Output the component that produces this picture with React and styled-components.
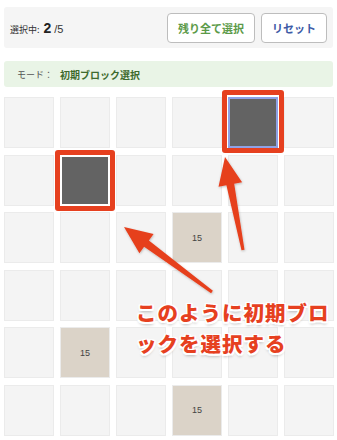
import styled, { createGlobalStyle } from 'styled-components';

const GlobalStyle = createGlobalStyle`
  html, body { margin: 0; padding: 0; background: #fff; }
  body { font-family: "Noto Sans CJK JP", "Noto Sans", sans-serif; }
`;

const Page = styled.div`
  position: relative;
  width: 337px;
  height: 440px;
  overflow: hidden;
  padding: 7px 4px 0;
  box-sizing: border-box;
`;

const Header = styled.div`
  height: 41px;
  background: #f5f5f5;
  border-radius: 3px;
  display: flex;
  align-items: center;
  justify-content: space-between;
  padding: 0 6px 0 6px;
  box-sizing: border-box;
`;

const Count = styled.div`
  font-size: 9px;
  color: #333;
  display: flex;
  align-items: baseline;
  gap: 2px;
  b {
    font-family: "Liberation Sans", sans-serif;
    font-size: 14px;
    font-weight: 700;
    color: #222;
    margin-left: 2px;
  }
  i {
    font-style: normal;
    font-family: "Liberation Sans", sans-serif;
    font-size: 11px;
    margin-left: 1px;
  }
`;

const Buttons = styled.div`
  display: flex;
  gap: 6px;
`;

const Button = styled.button`
  height: 30px;
  padding: 0 10px;
  background: #fff;
  border: 1px solid #bdbdbd;
  border-radius: 4px;
  font-family: inherit;
  font-size: 11px;
  font-weight: 700;
  color: ${({ $color }) => $color};
`;

const Mode = styled.div`
  margin-top: 13px;
  height: 26px;
  background: #e9f4e6;
  border-radius: 3px;
  display: flex;
  align-items: center;
  padding-left: 13px;
  font-size: 9px;
  color: #555;
  span {
    margin-left: 7px;
    font-size: 10px;
    font-weight: 700;
    color: #3e6b2e;
  }
`;

const Board = styled.div`
  margin-top: 10px;
  display: grid;
  grid-template-columns: repeat(6, 50px);
  grid-auto-rows: 51px;
  column-gap: 6px;
  row-gap: 6.5px;
`;

const Cell = styled.div`
  position: relative;
  box-sizing: border-box;
  background: ${({ $kind }) =>
    $kind === 'sel' ? '#636363' : $kind === 'num' ? '#dbd3c8' : '#f4f4f4'};
  border: ${({ $kind, $ring }) =>
    $kind === 'sel' ? `2px solid ${$ring}` : '1px solid #ebebeb'};
  display: flex;
  align-items: center;
  justify-content: center;
  font-family: "Liberation Sans", sans-serif;
  font-size: 9px;
  color: #444;
`;

const Highlight = styled.div`
  position: absolute;
  inset: ${({ $inset }) => $inset};
  border: 5px solid #e6401f;
  border-radius: 3px;
`;

const Arrows = styled.svg`
  position: absolute;
  left: 0;
  top: 0;
  pointer-events: none;
`;

const Note = styled.div`
  position: absolute;
  left: 136px;
  top: 297px;
  font-size: 20.5px;
  font-weight: 900;
  line-height: 31px;
  color: #e6401f;
  letter-spacing: 1px;
  text-shadow: 1.5px 1.5px 0 #fff, -1.5px -1.5px 0 #fff, 1.5px -1.5px 0 #fff,
    -1.5px 1.5px 0 #fff, 0 1.5px 0 #fff, 0 -1.5px 0 #fff, 1.5px 0 0 #fff, -1.5px 0 0 #fff,
    0 3px 3px rgba(0, 0, 0, 0.25);
`;

const special = {
  4: { kind: 'sel', ring: '#8ea1e6', inset: '-9px -8px -7px -8px' },
  7: { kind: 'sel', ring: '#ffffff', inset: '-7px -7px -7px -7px' },
  15: { kind: 'num' },
  25: { kind: 'num' },
  33: { kind: 'num' },
};

export default function App() {
  const cells = Array.from({ length: 36 }, (_, i) => i);
  return (
    <Page>
      <GlobalStyle />
      <Header>
        <Count>
          選択中: <b>2</b> <i>/5</i>
        </Count>
        <Buttons>
          <Button $color="#5b9a48">残り全て選択</Button>
          <Button $color="#3d5aa6">リセット</Button>
        </Buttons>
      </Header>
      <Mode>
        モード：<span>初期ブロック選択</span>
      </Mode>
      <Board>
        {cells.map((i) => {
          const s = special[i];
          return (
            <Cell key={i} $kind={s?.kind} $ring={s?.ring}>
              {s?.kind === 'num' && '15'}
              {s?.kind === 'sel' && <Highlight $inset={s.inset} />}
            </Cell>
          );
        })}
      </Board>
      <Arrows width="337" height="440" viewBox="0 0 337 440">
        <defs>
          <filter id="sh" x="-20%" y="-20%" width="140%" height="140%">
            <feDropShadow dx="0.5" dy="1" stdDeviation="0.8" floodColor="#000" floodOpacity="0.25" />
          </filter>
        </defs>
        <g fill="#e6401f" filter="url(#sh)">
          <polygon points="225,157 242.1,182.2 234.2,183.7 244.5,249.7 241.5,250.3 226.4,185.3 218.5,186.8" />
          <polygon points="124,227 153.6,234 148.9,240.4 212.9,290.8 211.1,293.2 144.1,246.8 139.4,253.2" />
        </g>
      </Arrows>
      <Note>
        このように初期ブロ
        <br />
        ックを選択する
      </Note>
    </Page>
  );
}
